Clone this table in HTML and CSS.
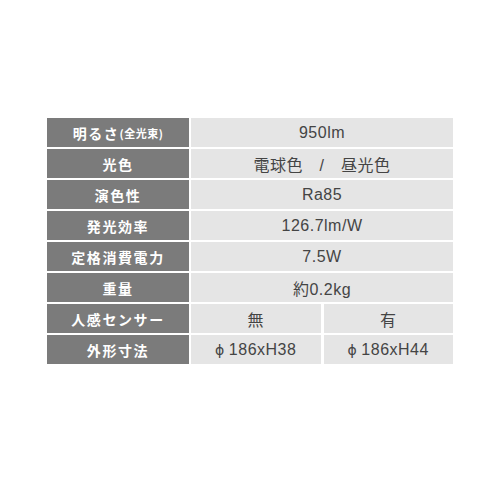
FILE: index.html
```html
<!DOCTYPE html>
<html lang="ja">
<head>
<meta charset="utf-8">
<link rel="stylesheet" href="styles.css">
</head>
<body>
<div class="spec">
  <div class="row"><div class="th">明るさ<span class="small">(全光束)</span></div><div class="td">950lm</div></div>
  <div class="row"><div class="th">光色</div><div class="td">電球色　/　昼光色</div></div>
  <div class="row"><div class="th">演色性</div><div class="td">Ra85</div></div>
  <div class="row"><div class="th">発光効率</div><div class="td">126.7lm/W</div></div>
  <div class="row"><div class="th">定格消費電力</div><div class="td">7.5W</div></div>
  <div class="row"><div class="th">重量</div><div class="td">約0.2kg</div></div>
  <div class="row"><div class="th">人感センサー</div><div class="td split"><span class="cell">無</span><span class="cell">有</span></div></div>
  <div class="row"><div class="th">外形寸法</div><div class="td split"><span class="cell"><span class="phi">ϕ</span>186xH38</span><span class="cell"><span class="phi">ϕ</span>186xH44</span></div></div>
</div>
</body>
</html>
```
FILE: styles.css
```css
html, body {
  margin: 0;
  padding: 0;
  background: #ffffff;
}
body {
  font-family: "Noto Sans CJK JP", "Noto Sans", sans-serif;
}
.spec {
  width: 406px;
  margin: 118px 0 0 47px;
  display: flex;
  flex-direction: column;
  gap: 2px;
}
.row {
  display: grid;
  grid-template-columns: 142px 1fr;
  gap: 2px;
  height: 29px;
}
.th {
  background: #7b7b7b;
  color: #ffffff;
  font-weight: 700;
  font-size: 14px;
  letter-spacing: 1.6px;
  display: flex;
  align-items: center;
  justify-content: center;
}
.th .small {
  font-size: 11px;
  letter-spacing: 0.5px;
}
.td {
  background: #e5e5e5;
  color: #444444;
  font-family: "Liberation Sans", "Noto Sans CJK JP", sans-serif;
  font-size: 16px;
  letter-spacing: 0.5px;
  display: flex;
  align-items: center;
  justify-content: center;
}
.td.split {
  background: transparent;
  display: grid;
  grid-template-columns: 1fr 1fr;
  gap: 3px;
}
.td.split .cell {
  background: #e5e5e5;
  height: 100%;
  display: flex;
  align-items: center;
  justify-content: center;
}
.phi {
  font-family: "DejaVu Sans", sans-serif;
  font-size: 14px;
  margin-right: 4px;
}
```
